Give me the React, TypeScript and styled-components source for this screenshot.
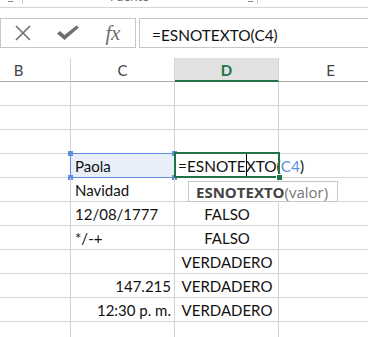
import React from 'react';
import styled, { createGlobalStyle } from 'styled-components';

const Global = createGlobalStyle`
  html, body { margin: 0; padding: 0; background: #fff; overflow: hidden; }
  #root { width: 368px; height: 337px; }
`;

const CELL_FONT = `Lato, "Open Sans", sans-serif`;
const UI_FONT = `"Open Sans", "Noto Sans", sans-serif`;

const Page = styled.div`
  width: 368px;
  height: 337px;
  overflow: hidden;
  background: #fff;
  display: flex;
  flex-direction: column;
`;

const Ribbon = styled.div`
  flex-shrink: 0;
  height: 7px;
  border-bottom: 1px solid #d5d5d5;
  display: flex;
  overflow: hidden;
`;

const RibbonGroup = styled.div<{ $w: number; $pad: number }>`
  width: ${(p) => p.$w}px;
  padding-left: ${(p) => p.$pad}px;
  box-sizing: border-box;
  display: flex;
  align-items: flex-start;
  position: relative;
`;

const Launcher = styled.div`
  width: 5px;
  height: 1px;
  margin-top: 1px;
  background: #8a8a8a;
`;

const GroupLabel = styled.div`
  font-family: ${UI_FONT};
  font-size: 12px;
  line-height: 12px;
  margin-top: -9px;
  color: #666;
  width: 138px;
`;

const RibbonSep = styled.div`
  width: 1px;
  height: 4px;
  background: #c8c8c8;
`;

const FormulaBar = styled.div`
  flex-shrink: 0;
  margin-top: 10px;
  height: 30px;
  display: flex;
  gap: 3px;
`;

const IconsBox = styled.div`
  width: 136px;
  box-sizing: border-box;
  border: 1px solid #c6c6c6;
  display: flex;
  align-items: center;
`;

const IconSlot = styled.div`
  width: 45px;
  height: 28px;
  display: flex;
  align-items: center;
  justify-content: center;
`;

const Fx = styled.span`
  font-family: "Liberation Serif", serif;
  font-style: italic;
  font-size: 21px;
  color: #6f6f6f;
  line-height: 28px;
  letter-spacing: -0.5px;
`;

const FormulaInput = styled.div`
  flex: 1;
  box-sizing: border-box;
  border: 1px solid #c6c6c6;
  border-right: none;
  padding-left: 12px;
  display: flex;
  align-items: center;
  font-family: ${CELL_FONT};
  font-size: 15.4px;
  color: #111;
  padding-top: 3px;
`;

const Sheet = styled.div`
  margin-top: 10px;
  margin-left: -33px;
  position: relative;
  display: grid;
  grid-template-columns: repeat(4, 104px);
`;

const HeaderCell = styled.div<{ $active?: boolean }>`
  height: 24px;
  box-sizing: border-box;
  border-right: 1px solid #d4d4d4;
  border-bottom: ${(p) => (p.$active ? '2px solid #217346' : '1px solid #ababab')};
  background: ${(p) => (p.$active ? '#e1e1e1' : '#fff')};
  color: ${(p) => (p.$active ? '#217346' : '#444')};
  font-weight: ${(p) => (p.$active ? 700 : 400)};
  font-family: ${CELL_FONT};
  font-size: 15px;
  display: flex;
  align-items: center;
  justify-content: center;
  padding-top: 1px;
`;

const Cell = styled.div<{ $align?: 'left' | 'center' | 'right'; $ref?: boolean }>`
  position: relative;
  height: 24px;
  box-sizing: border-box;
  border-right: 1px solid #d4d4d4;
  border-bottom: 1px solid #d4d4d4;
  background: ${(p) => (p.$ref ? '#e9eff9' : 'transparent')};
  padding: 0 3px 2px 4px;
  display: flex;
  align-items: flex-end;
  justify-content: ${(p) =>
    p.$align === 'right' ? 'flex-end' : p.$align === 'center' ? 'center' : 'flex-start'};
  font-family: ${CELL_FONT};
  font-size: 15px;
  line-height: 18px;
  color: #111;
  white-space: nowrap;
`;

const RefBox = styled.div`
  position: absolute;
  left: -1px;
  top: -1px;
  right: -1px;
  bottom: -1px;
  border: 1px solid #5b8fe3;
  pointer-events: none;
`;

const Handle = styled.div<{ $x: 'l' | 'r'; $y: 't' | 'b' }>`
  position: absolute;
  width: 5px;
  height: 5px;
  background: #5b8fe3;
  ${(p) => (p.$x === 'l' ? 'left: -3px;' : 'right: -3px;')}
  ${(p) => (p.$y === 't' ? 'top: -3px;' : 'bottom: -3px;')}
`;

const ActiveBox = styled.div`
  position: absolute;
  left: -1px;
  top: -2px;
  right: -2px;
  bottom: -1px;
  border: 2px solid #217346;
  z-index: 3;
  pointer-events: none;
`;

const FillHandle = styled.div`
  position: absolute;
  right: -4px;
  bottom: -4px;
  width: 5px;
  height: 5px;
  background: #217346;
  border: 1px solid #fff;
  border-width: 1px 0 0 1px;
`;

const Editor = styled.div`
  position: absolute;
  left: 1px;
  top: 0;
  bottom: 0;
  padding: 0 6px 2px 2px;
  background: #fff;
  display: flex;
  align-items: flex-end;
  z-index: 2;
  font-family: ${CELL_FONT};
  font-size: 15.4px;
  line-height: 18px;
  color: #111;
  white-space: nowrap;
`;

const RefText = styled.span`
  color: #5b8fe3;
`;

const Caret = styled.span`
  display: inline-block;
  width: 1px;
  height: 23px;
  margin-bottom: -2px;
  margin-right: -1px;
  background: #000;
  vertical-align: bottom;
`;

const Tooltip = styled.div`
  position: absolute;
  left: 221px;
  top: 123px;
  height: 21px;
  box-sizing: border-box;
  border: 1px solid #c6c6c6;
  background: #fff;
  padding: 0 9px 0 7px;
  display: flex;
  align-items: center;
  font-family: ${UI_FONT};
  font-size: 15px;
  color: #777;
  z-index: 4;
  white-space: nowrap;
`;

const FnName = styled.b`
  color: #444;
  font-weight: 700;
`;

type Align = 'left' | 'center' | 'right';
type Row = { c?: string; cAlign?: Align; d?: string };

const rows: Row[] = [
  {},
  {},
  {},
  { c: 'Paola' },
  { c: 'Navidad' },
  { c: '12/08/1777', d: 'FALSO' },
  { c: '*/-+', d: 'FALSO' },
  { d: 'VERDADERO' },
  { c: '147.215', cAlign: 'right', d: 'VERDADERO' },
  { c: '12:30 p. m.', cAlign: 'right', d: 'VERDADERO' },
  {},
];

const CancelIcon = () => (
  <svg width="18" height="18" viewBox="0 0 18 18">
    <path d="M2 2 L16 16 M16 2 L2 16" stroke="#6f6f6f" strokeWidth="1.6" fill="none" />
  </svg>
);

const EnterIcon = () => (
  <svg width="24" height="16" viewBox="0 0 24 16">
    <path d="M1 8.5 L4 6 L8.5 10 L20.5 0.5 L23 2.5 L8.5 15 Z" fill="#6f6f6f" />
  </svg>
);

export default function App() {
  return (
    <Page>
      <Global />
      <Ribbon>
        <RibbonGroup $w={22} $pad={8}>
          <Launcher />
        </RibbonGroup>
        <RibbonSep />
        <RibbonGroup $w={234} $pad={87}>
          <GroupLabel>Fuente</GroupLabel>
          <Launcher />
        </RibbonGroup>
        <RibbonSep />
      </Ribbon>

      <FormulaBar>
        <IconsBox>
          <IconSlot>
            <CancelIcon />
          </IconSlot>
          <IconSlot>
            <EnterIcon />
          </IconSlot>
          <IconSlot>
            <Fx>fx</Fx>
          </IconSlot>
        </IconsBox>
        <FormulaInput>=ESNOTEXTO(C4)</FormulaInput>
      </FormulaBar>

      <Sheet>
        <HeaderCell>B</HeaderCell>
        <HeaderCell>C</HeaderCell>
        <HeaderCell $active>D</HeaderCell>
        <HeaderCell>E</HeaderCell>
        {rows.map((r, i) => {
          const isActiveRow = i === 3;
          return (
            <React.Fragment key={i}>
              <Cell />
              <Cell $align={r.cAlign ?? 'left'} $ref={isActiveRow}>
                {r.c}
                {isActiveRow && (
                  <RefBox>
                    <Handle $x="l" $y="t" />
                    <Handle $x="r" $y="t" />
                    <Handle $x="l" $y="b" />
                    <Handle $x="r" $y="b" />
                  </RefBox>
                )}
              </Cell>
              <Cell $align="center">
                {r.d}
                {isActiveRow && (
                  <>
                    <Editor>
                      =ESNOTE<Caret />XTO(<RefText>C4</RefText>)
                    </Editor>
                    <ActiveBox>
                      <FillHandle />
                    </ActiveBox>
                  </>
                )}
              </Cell>
              <Cell />
            </React.Fragment>
          );
        })}
        <Tooltip>
          <FnName>ESNOTEXTO</FnName>(valor)
        </Tooltip>
      </Sheet>
    </Page>
  );
}
